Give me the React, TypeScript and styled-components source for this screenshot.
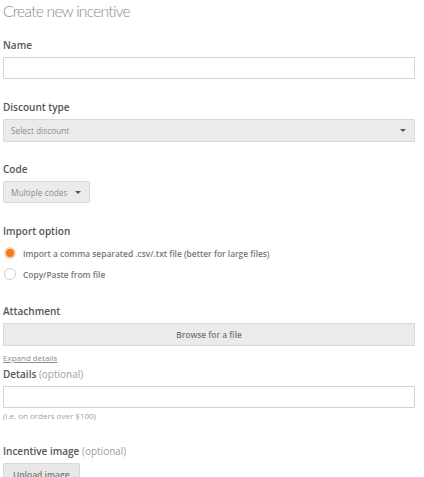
import React, { useState } from 'react'
import styled, { createGlobalStyle } from 'styled-components'

const GlobalStyle = createGlobalStyle`
  html, body {
    margin: 0;
    padding: 0;
    background: #ffffff;
  }
  body {
    font-family: 'Open Sans', 'Liberation Sans', sans-serif;
    color: #555;
  }
`

const Page = styled.div`
  padding: 0 9px 0 3px;
  width: 412px;
`

const Title = styled.h1`
  margin: 0;
  padding-top: 1px;
  font-family: 'Lato', 'Open Sans', sans-serif;
  font-weight: 300;
  font-size: 15.5px;
  line-height: 20px;
  color: #8a8a8a;
  letter-spacing: -0.7px;
`

const Field = styled.div<{ $top: number }>`
  margin-top: ${p => p.$top}px;
`

const Label = styled.div`
  font-family: 'Open Sans', sans-serif;
  font-size: 10px;
  font-weight: 600;
  line-height: 14px;
  color: #555;
  margin-bottom: 5px;
`

const Optional = styled.span`
  font-weight: 400;
  color: #a0a0a0;
`

const TextInput = styled.input`
  display: block;
  box-sizing: border-box;
  width: 100%;
  height: 22px;
  border: 1px solid #d2d2d2;
  border-radius: 1px;
  background: #fff;
  outline: none;
`

const SelectBox = styled.div<{ $compact?: boolean }>`
  box-sizing: border-box;
  display: flex;
  width: ${p => (p.$compact ? 'fit-content' : 'auto')};
  align-items: center;
  justify-content: space-between;
  height: ${p => (p.$compact ? 22 : 23)}px;
  padding: 0 8px 0 7px;
  gap: 8px;
  background: #ebebeb;
  border: 1px solid #d9d9d9;
  border-radius: 1px;
  font-size: 8.3px;
  color: #8c8c8c;
`

const Caret = styled.span`
  width: 0;
  height: 0;
  border-left: 3px solid transparent;
  border-right: 3px solid transparent;
  border-top: 3.5px solid #555;
`

const RadioList = styled.div`
  display: flex;
  flex-direction: column;
  gap: 9px;
  padding-top: 4px;
`

const RadioRow = styled.label`
  display: flex;
  align-items: center;
  height: 12px;
  gap: 7px;
  font-size: 8.4px;
  font-weight: 600;
  color: #777;
  cursor: pointer;
`

const RadioDot = styled.span<{ $on: boolean }>`
  box-sizing: border-box;
  width: 12px;
  height: 12px;
  border-radius: 50%;
  margin-left: 1px;
  border: ${p => (p.$on ? '2px solid #fbd3b5' : '1px solid #cfcfcf')};
  background: ${p => (p.$on ? '#f07a1e' : '#fff')};
`

const BrowseBar = styled.div`
  box-sizing: border-box;
  height: 23px;
  display: flex;
  align-items: center;
  justify-content: center;
  background: #ebebeb;
  border: 1px solid #d9d9d9;
  font-size: 8.4px;
  font-weight: 600;
  color: #777;
`

const SmallLink = styled.a`
  display: block;
  width: fit-content;
  margin-top: 7px;
  font-size: 8px;
  color: #8c8c8c;
  text-decoration: underline;
  line-height: 10px;
`

const Hint = styled.div`
  margin-top: 2px;
  font-size: 8px;
  color: #a0a0a0;
  line-height: 11px;
`

const GreyButton = styled.button`
  display: block;
  box-sizing: border-box;
  height: 22px;
  padding: 0 9px;
  background: #e8e8e8;
  border: 1px solid #d9d9d9;
  border-radius: 1px;
  font-family: 'Open Sans', sans-serif;
  font-size: 8.5px;
  font-weight: 600;
  color: #777;
`

export default function App() {
  const [mode, setMode] = useState('csv')

  return (
    <>
      <GlobalStyle />
      <Page>
        <Title>Create new incentive</Title>

        <Field $top={17}>
          <Label>Name</Label>
          <TextInput type="text" />
        </Field>

        <Field $top={21}>
          <Label>Discount type</Label>
          <SelectBox>
            <span>Select discount</span>
            <Caret />
          </SelectBox>
        </Field>

        <Field $top={20}>
          <Label>Code</Label>
          <SelectBox $compact>
            <span>Multiple codes</span>
            <Caret />
          </SelectBox>
        </Field>

        <Field $top={21}>
          <Label>Import option</Label>
          <RadioList>
            <RadioRow onClick={() => setMode('csv')}>
              <RadioDot $on={mode === 'csv'} />
              Import a comma separated .csv/.txt file (better for large files)
            </RadioRow>
            <RadioRow onClick={() => setMode('paste')}>
              <RadioDot $on={mode === 'paste'} />
              Copy/Paste from file
            </RadioRow>
          </RadioList>
        </Field>

        <Field $top={24}>
          <Label>Attachment</Label>
          <BrowseBar>Browse for a file</BrowseBar>
          <SmallLink>Expand details</SmallLink>
        </Field>

        <Field $top={4}>
          <Label>
            Details <Optional>(optional)</Optional>
          </Label>
          <TextInput type="text" />
          <Hint>(i.e. on orders over $100)</Hint>
        </Field>

        <Field $top={23}>
          <Label>
            Incentive image <Optional>(optional)</Optional>
          </Label>
          <GreyButton>Upload image</GreyButton>
        </Field>
      </Page>
    </>
  )
}
